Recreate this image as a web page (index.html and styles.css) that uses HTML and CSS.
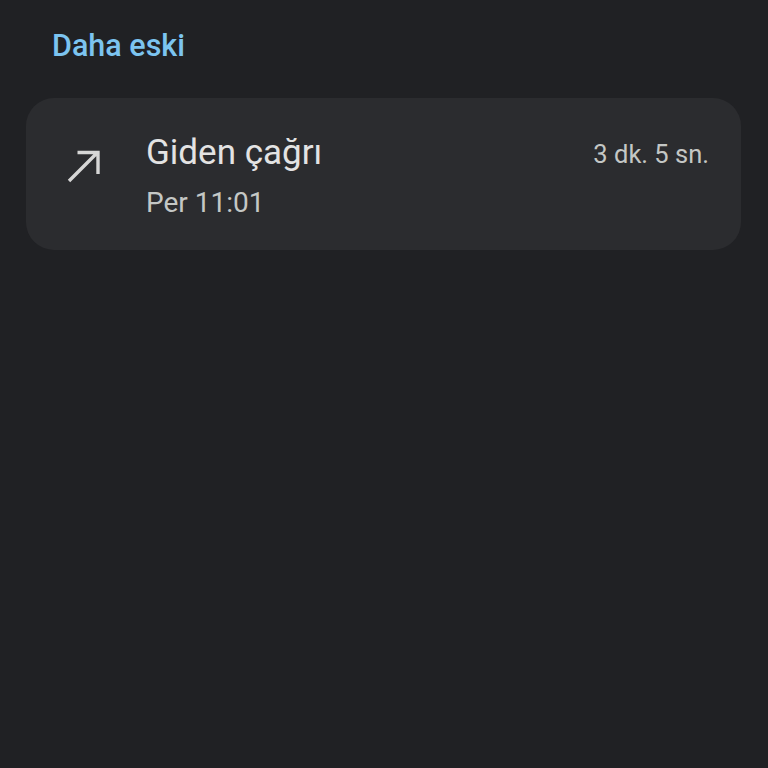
FILE: index.html
```html
<!DOCTYPE html>
<html lang="tr">
<head>
<meta charset="utf-8">
<link rel="stylesheet" href="styles.css">
</head>
<body>
<main class="page">
  <h2 class="section-title">Daha eski</h2>
  <div class="card">
    <div class="icon">
      <svg width="40" height="40" viewBox="0 0 40 40">
        <path d="M9 35 L37 7 M17.5 6.5 H38 V28" fill="none" stroke="#d6d6d6" stroke-width="3.4"/>
      </svg>
    </div>
    <div class="info">
      <div class="title">Giden çağrı</div>
      <div class="sub">Per 11:01</div>
    </div>
    <div class="duration">3 dk. 5 sn.</div>
  </div>
</main>
</body>
</html>
```
FILE: styles.css
```css
html, body {
  margin: 0;
  padding: 0;
  background: #202124;
  height: 100%;
}
.page {
  padding: 24px 27px 0 26px;
  font-family: Roboto, "Noto Sans", sans-serif;
}
.section-title {
  margin: 0 0 0 26px;
  font-size: 30.5px;
  font-weight: 500;
  color: #7cc4f0;
  line-height: 44px;
  height: 50px;
}
.card {
  margin-top: 24px;
  background: #2b2c2f;
  border-radius: 28px;
  height: 152px;
  display: flex;
  align-items: flex-start;
  padding: 0 32px 0 34px;
  box-sizing: border-box;
}
.icon {
  margin-top: 48px;
  width: 40px;
  height: 40px;
}
.info {
  margin-left: 46px;
  flex: 1;
  padding-top: 32px;
}
.title {
  font-size: 35px;
  color: #e3e3e3;
  line-height: 46px;
}
.sub {
  font-size: 28px;
  color: #c4c7c5;
  line-height: 40px;
  margin-top: 7px;
}
.duration {
  padding-top: 39px;
  font-size: 25.5px;
  color: #c4c7c5;
  line-height: 34px;
}
```
